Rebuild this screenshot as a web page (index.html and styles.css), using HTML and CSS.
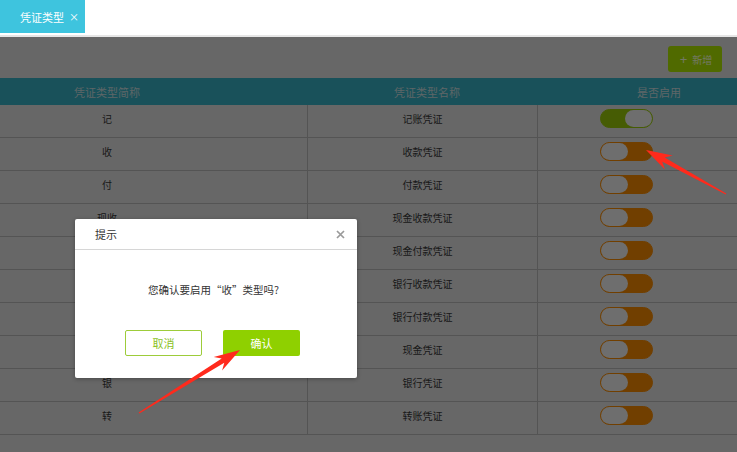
FILE: index.html
```html
<!DOCTYPE html>
<html lang="zh-CN">
<head>
    <meta charset="UTF-8">
    <meta name="viewport" content="width=device-width, initial-scale=1.0">
    <title>凭证类型</title>
    <link rel="stylesheet" href="styles.css">
</head>
<body>

    <!-- Tab bar -->
    <div class="topbar">
        <div class="tab">凭证类型<span class="tab-close">×</span></div>
    </div>

    <div class="main">
        <div class="toolbar">
            <button class="btn-add"><span class="plus">+</span>新增</button>
        </div>

        <div class="table">
            <div class="row head">
                <div class="cell c1">凭证类型简称</div>
                <div class="cell c2">凭证类型名称</div>
                <div class="cell c3">是否启用</div>
            </div>
            <div class="row"><div class="cell c1">记</div><div class="cell c2">记账凭证</div><div class="cell c3"><span class="switch on"></span></div></div>
            <div class="row"><div class="cell c1">收</div><div class="cell c2">收款凭证</div><div class="cell c3"><span class="switch"></span></div></div>
            <div class="row"><div class="cell c1">付</div><div class="cell c2">付款凭证</div><div class="cell c3"><span class="switch"></span></div></div>
            <div class="row"><div class="cell c1">现收</div><div class="cell c2">现金收款凭证</div><div class="cell c3"><span class="switch"></span></div></div>
            <div class="row"><div class="cell c1">现付</div><div class="cell c2">现金付款凭证</div><div class="cell c3"><span class="switch"></span></div></div>
            <div class="row"><div class="cell c1">银收</div><div class="cell c2">银行收款凭证</div><div class="cell c3"><span class="switch"></span></div></div>
            <div class="row"><div class="cell c1">银付</div><div class="cell c2">银行付款凭证</div><div class="cell c3"><span class="switch"></span></div></div>
            <div class="row"><div class="cell c1">现</div><div class="cell c2">现金凭证</div><div class="cell c3"><span class="switch"></span></div></div>
            <div class="row"><div class="cell c1">银</div><div class="cell c2">银行凭证</div><div class="cell c3"><span class="switch"></span></div></div>
            <div class="row"><div class="cell c1">转</div><div class="cell c2">转账凭证</div><div class="cell c3"><span class="switch"></span></div></div>
        </div>

        <!-- Mask -->
        <div class="mask"></div>
    </div>

    <!-- Confirm dialog -->
    <div class="dialog">
        <div class="dialog-title">
            <span>提示</span>
            <svg class="dialog-close" width="9" height="9" viewBox="0 0 9 9"><path d="M1 1L8 8M8 1L1 8" stroke="#9a9a9a" stroke-width="1.7"/></svg>
        </div>
        <div class="dialog-body">
            <p class="dialog-msg">您确认要启用“收”类型吗?</p>
            <div class="dialog-btns">
                <button class="btn-cancel">取消</button>
                <button class="btn-ok">确认</button>
            </div>
        </div>
    </div>

    <!-- Annotation arrows -->
    <svg class="arrows" width="737" height="452" viewBox="0 0 737 452">
        <polygon fill="#ff2a1c" points="726.2,193.6 664.7,157.4 672.7,155.5 646,150 664.9,169.5 662.3,161.8 725.8,194.4"/>
        <polygon fill="#ff2a1c" points="139.3,413.5 224.3,362.7 222.1,370.6 240,350 213.7,357 221.7,358.5 138.7,412.5"/>
    </svg>

</body>
</html>
```

FILE: styles.css
```css
body {
    margin: 0;
    font-family: "Noto Sans CJK SC", "Liberation Sans", sans-serif;
    background: #fff;
    position: relative;
    overflow: hidden;
}

/* Tab bar */
.topbar {
    height: 35px;
    background: #fff;
    border-bottom: 2px solid #e6e6e6;
}

.tab {
    display: inline-flex;
    align-items: center;
    height: 33px;
    width: 85px;
    padding-left: 20px;
    box-sizing: border-box;
    background: #3ec4de;
    color: #fff;
    font-size: 11px;
}

.tab-close {
    margin-left: 5px;
    font-size: 10px;
}

/* Main */
.main {
    position: relative;
    background: #cecece;
    height: calc(100vh - 37px);
}

.toolbar {
    height: 41px;
    display: flex;
    justify-content: flex-end;
    align-items: flex-start;
    padding-right: 15px;
    box-sizing: border-box;
}

.btn-add {
    margin-top: 9px;
    width: 54px;
    height: 26px;
    border: none;
    border-radius: 3px;
    background: #a0d400;
    color: #e4f0c8;
    font-family: inherit;
    font-size: 10px;
    padding: 0 0 0 2px;
}

.plus {
    font-size: 13px;
    font-family: "Liberation Sans", sans-serif;
    margin-right: 5px;
}

.table {
    font-size: 10px;
    color: #333;
}

.row {
    display: grid;
    grid-template-columns: 307px 231px 1fr;
    height: 33px;
    border-bottom: 1px solid #a8a8a8;
    box-sizing: border-box;
}

.cell {
    display: flex;
    align-items: center;
    padding-bottom: 6px;
    box-sizing: border-box;
}

.c1 {
    justify-content: center;
    padding-right: 93px;
}

.c2 {
    justify-content: center;
    border-left: 1px solid #a8a8a8;
    border-right: 1px solid #a8a8a8;
}

.c3 {
    padding-left: 62px;
}

.row.head {
    height: 27px;
    background: #32a3b4;
    color: #bccccf;
    font-size: 11px;
    border-bottom: none;
}

.row.head .cell {
    padding-bottom: 0;
    border: none;
}

.row.head .c2 {
    padding-left: 9px;
}

.row.head .c3 {
    padding-left: 99px;
}

/* Switch */
.switch {
    position: relative;
    width: 53px;
    height: 19px;
    border-radius: 10px;
    background: #e27e00;
    border: 1px solid #e27e00;
    box-sizing: border-box;
}

.switch::after {
    content: "";
    position: absolute;
    top: 0;
    left: 0;
    width: 27px;
    height: 17px;
    border-radius: 9px;
    background: #dcdcdc;
}

.switch.on {
    background: #8cb808;
    border-color: #8cb808;
}

.switch.on::after {
    left: auto;
    right: 0;
}

.mask {
    position: absolute;
    left: 0;
    top: 0;
    right: 0;
    bottom: 0;
    background: rgba(0, 0, 0, 0.5);
}

/* Dialog */
.dialog {
    position: absolute;
    left: 75px;
    top: 219px;
    width: 282px;
    background: #fff;
    border-radius: 2px;
    box-shadow: 0 1px 4px rgba(0, 0, 0, 0.3);
    color: #333;
}

.dialog-title {
    height: 30px;
    display: flex;
    align-items: center;
    justify-content: space-between;
    padding: 0 12px 0 20px;
    border-bottom: 1px solid #d6d6d6;
    font-size: 11px;
}

.dialog-body {
    padding: 34px 0 22px;
    text-align: center;
}

.dialog-msg {
    margin: 0;
    font-size: 10.5px;
    line-height: 12px;
    padding-right: 5px;
}

.dialog-btns {
    margin-top: 34px;
    display: flex;
    justify-content: center;
    gap: 21px;
    padding-right: 7px;
}

.dialog-btns button {
    width: 77px;
    height: 26px;
    border-radius: 2px;
    font-family: inherit;
    font-size: 11px;
    padding: 0;
}

.btn-cancel {
    background: #fff;
    border: 1px solid #9dcc3a;
    color: #8cc21f;
}

.btn-ok {
    background: #8fd000;
    border: none;
    color: #fff;
}

.arrows {
    position: absolute;
    left: 0;
    top: 0;
    pointer-events: none;
}
```
